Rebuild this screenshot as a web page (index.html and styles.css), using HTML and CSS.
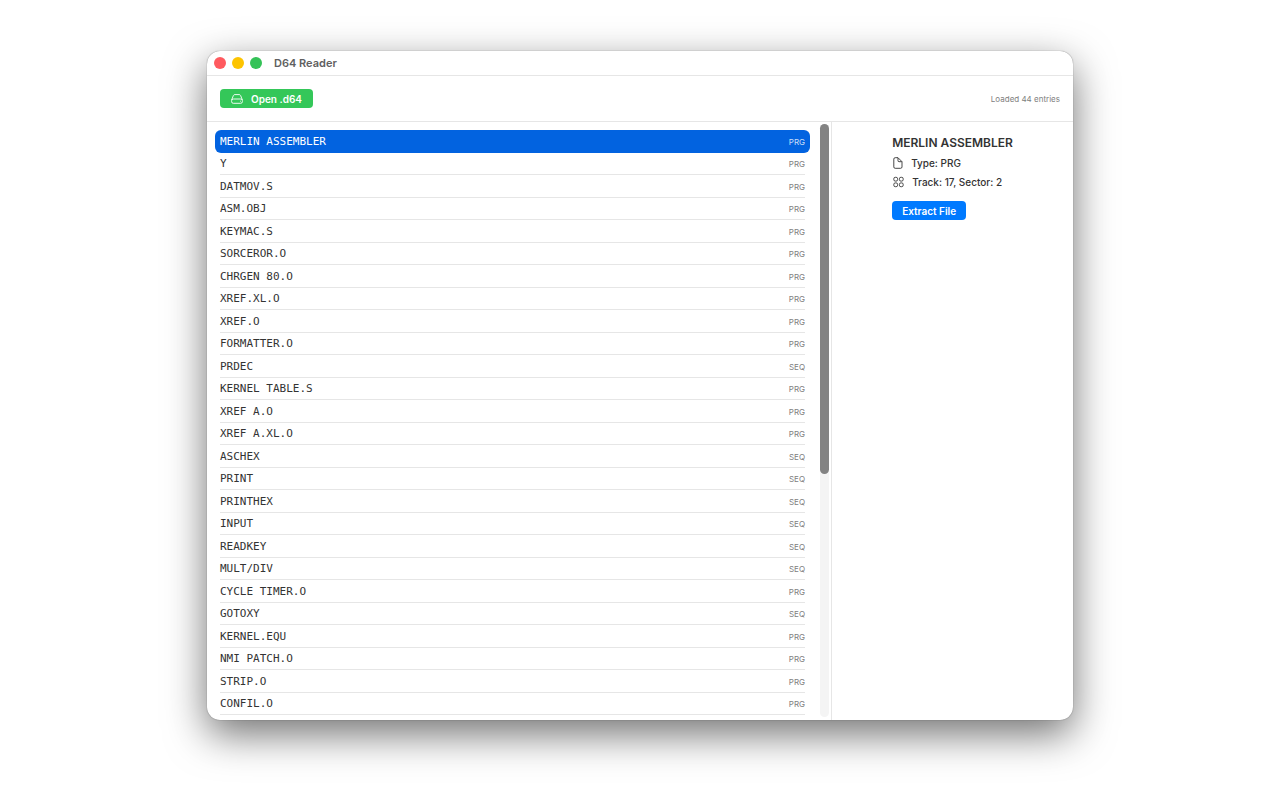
FILE: index.html
```html
<!DOCTYPE html>
<html lang="en">
<head>
    <meta charset="UTF-8">
    <meta name="viewport" content="width=device-width, initial-scale=1.0">
    <title>D64 Reader</title>
    <link rel="stylesheet" href="styles.css">
</head>
<body>

    <div class="window">
        <header class="titlebar">
            <span class="light close"></span>
            <span class="light minimize"></span>
            <span class="light zoom"></span>
            <h1>D64 Reader</h1>
        </header>

        <div class="toolbar">
            <button class="open-button" type="button">
                <svg width="12" height="10" viewBox="0 0 12 10" fill="none" stroke="currentColor" stroke-width="0.9" stroke-linejoin="round">
                    <path d="M0.6 6 L2.4 1.5 Q2.8 0.6 3.8 0.6 H8.2 Q9.2 0.6 9.6 1.5 L11.4 6"/>
                    <rect x="0.6" y="5" width="10.8" height="4.3" rx="1.7"/>
                    <path d="M9 7.2 H9.8"/>
                </svg>
                Open .d64
            </button>
            <span class="status">Loaded 44 entries</span>
        </div>

        <div class="content">
            <div class="list-pane">
                <ul class="file-list">
                    <li class="selected"><span>MERLIN ASSEMBLER</span><small>PRG</small></li>
                    <li><span>Y</span><small>PRG</small></li>
                    <li><span>DATMOV.S</span><small>PRG</small></li>
                    <li><span>ASM.OBJ</span><small>PRG</small></li>
                    <li><span>KEYMAC.S</span><small>PRG</small></li>
                    <li><span>SORCEROR.O</span><small>PRG</small></li>
                    <li><span>CHRGEN 80.O</span><small>PRG</small></li>
                    <li><span>XREF.XL.O</span><small>PRG</small></li>
                    <li><span>XREF.O</span><small>PRG</small></li>
                    <li><span>FORMATTER.O</span><small>PRG</small></li>
                    <li><span>PRDEC</span><small>SEQ</small></li>
                    <li><span>KERNEL TABLE.S</span><small>PRG</small></li>
                    <li><span>XREF A.O</span><small>PRG</small></li>
                    <li><span>XREF A.XL.O</span><small>PRG</small></li>
                    <li><span>ASCHEX</span><small>SEQ</small></li>
                    <li><span>PRINT</span><small>SEQ</small></li>
                    <li><span>PRINTHEX</span><small>SEQ</small></li>
                    <li><span>INPUT</span><small>SEQ</small></li>
                    <li><span>READKEY</span><small>SEQ</small></li>
                    <li><span>MULT/DIV</span><small>SEQ</small></li>
                    <li><span>CYCLE TIMER.O</span><small>PRG</small></li>
                    <li><span>GOTOXY</span><small>SEQ</small></li>
                    <li><span>KERNEL.EQU</span><small>PRG</small></li>
                    <li><span>NMI PATCH.O</span><small>PRG</small></li>
                    <li><span>STRIP.O</span><small>PRG</small></li>
                    <li><span>CONFIL.O</span><small>PRG</small></li>
                </ul>
                <div class="scrollbar"><div class="thumb"></div></div>
            </div>

            <aside class="detail">
                <div class="detail-info">
                    <h2>MERLIN ASSEMBLER</h2>
                    <p>
                        <svg width="12" height="12" viewBox="0 0 12 12" fill="none" stroke="currentColor" stroke-width="0.9" stroke-linejoin="round">
                            <path d="M3.2 0.7 H6 L10 4.7 V9.9 Q10 11.3 8.6 11.3 H3.2 Q1.8 11.3 1.8 9.9 V2.1 Q1.8 0.7 3.2 0.7 Z"/>
                            <path d="M6 0.9 V3.7 Q6 4.7 7 4.7 H9.8"/>
                        </svg>
                        Type: PRG
                    </p>
                    <p>
                        <svg width="13" height="12" viewBox="0 0 13 12" fill="none" stroke="currentColor" stroke-width="0.9">
                            <rect x="1.8" y="1.3" width="3.8" height="3.8" rx="1.5"/>
                            <rect x="7.4" y="1.3" width="3.8" height="3.8" rx="1.5"/>
                            <rect x="1.8" y="6.9" width="3.8" height="3.8" rx="1.5"/>
                            <rect x="7.4" y="6.9" width="3.8" height="3.8" rx="1.5"/>
                        </svg>
                        Track: 17, Sector: 2
                    </p>
                    <button class="extract-button" type="button">Extract File</button>
                </div>
            </aside>
        </div>
    </div>

</body>
</html>
```

FILE: styles.css
```css
* {
    box-sizing: border-box;
}
body {
    display: flex;
    min-height: 100vh;
    margin: 0;
    padding: 51px 207px 80px;
    background: #fff;
    color: #333;
    font-family: Inter, "Liberation Sans", sans-serif;
    font-size: 10px;
}
.window {
    flex: 1;
    display: flex;
    flex-direction: column;
    border-radius: 13px;
    overflow: hidden;
    background: #fff;
    box-shadow: 0 0 1px rgba(0, 0, 0, 0.6), 0 14px 40px rgba(0, 0, 0, 0.56);
}
.titlebar {
    display: flex;
    align-items: center;
    gap: 6px;
    height: 25px;
    padding: 0 7px;
    border-bottom: 1px solid #e6e6e6;
}
.light {
    width: 12px;
    height: 12px;
    border-radius: 50%;
}
.close {
    background: #ff5a5f;
}
.minimize {
    background: #fdc400;
}
.zoom {
    background: #34c257;
}
h1 {
    margin: 0 0 0 6px;
    color: #606060;
    font-size: 11px;
    font-weight: 600;
}
.toolbar {
    display: flex;
    align-items: center;
    justify-content: space-between;
    height: 46px;
    padding: 0 13px;
    border-bottom: 1px solid #e6e6e6;
}
button {
    height: 19px;
    border: none;
    border-radius: 4px;
    color: #fff;
    font-family: inherit;
    font-size: 10px;
    font-weight: 600;
}
.open-button {
    display: flex;
    align-items: center;
    gap: 8px;
    padding: 0 11px;
    background: #34c759;
}
.status {
    color: #808080;
    font-size: 8px;
}
.content {
    flex: 1;
    display: flex;
}
.list-pane {
    flex: 1;
    display: flex;
    gap: 10px;
    padding-left: 8px;
    padding-right: 2px;
    border-right: 1px solid #e6e6e6;
}
/* rows share the height of the pane */
.file-list {
    flex: 1;
    display: grid;
    grid-auto-rows: 1fr;
    margin: 0;
    padding: 8px 0 5px;
    list-style: none;
}
.file-list li {
    display: flex;
    align-items: center;
    justify-content: space-between;
    margin: 0 5px;
    padding-top: 2px;
    border-bottom: 1px solid #e6e6e6;
}
.file-list .selected {
    margin: 0;
    padding: 1px 5px 0;
    border-bottom: none;
    border-radius: 6px;
    background: #0263e0;
    color: #fff;
}
.file-list span {
    font-family: "DejaVu Sans Mono", monospace;
    font-size: 11px;
    line-height: 14px;
}
.file-list small {
    color: #808080;
    font-size: 8px;
}
.file-list .selected small {
    color: #c9def8;
}
.scrollbar {
    width: 9px;
    margin: 2px 0 3px;
    border-radius: 5px;
    background: #f4f4f4;
}
.thumb {
    height: 59%;
    border-radius: 5px;
    background: #838383;
}
.detail {
    width: 241px;
    display: flex;
    justify-content: center;
    align-items: flex-start;
    padding-top: 13px;
}
h2 {
    margin: 0 0 4px;
    font-size: 12px;
    line-height: 16px;
    font-weight: 600;
}
.detail p {
    display: flex;
    align-items: center;
    gap: 7px;
    margin: 0 0 3px;
    line-height: 16px;
    font-weight: 500;
}
.extract-button {
    margin-top: 8px;
    padding: 0 10px;
    background: #007aff;
}
```
